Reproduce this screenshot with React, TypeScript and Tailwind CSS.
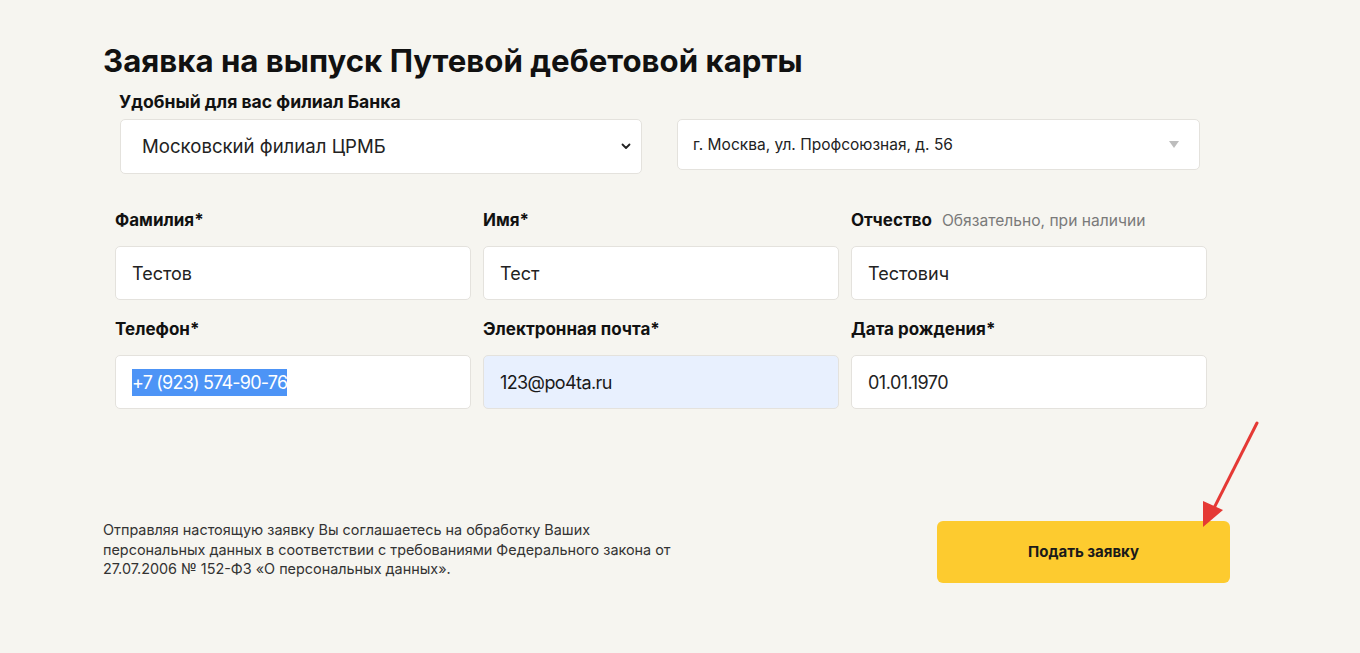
import React from 'react';

const font = { fontFamily: 'Inter, "Noto Sans", sans-serif' };

interface FieldProps {
  label: string;
  required?: boolean;
  hint?: string;
  children: React.ReactNode;
  tone?: 'white' | 'autofill';
}

const Field: React.FC<FieldProps> = ({ label, required, hint, children, tone = 'white' }) => (
  <div className="flex flex-col gap-[15px]">
    <div className="flex items-baseline gap-[10px] h-[21px] leading-[21px]">
      <span className="text-[17px] font-bold text-[#111]">
        {label}
        {required && <span className="font-bold">*</span>}
      </span>
      {hint && <span className="text-[15.6px] text-[#7a7a7a]">{hint}</span>}
    </div>
    <div
      className={
        tone === 'autofill'
          ? 'h-[54px] rounded-[5px] border border-[#e4e2dd] bg-[#e8f0fe] flex items-center px-[16px] text-[18px] text-[#1a1a1a]'
          : 'h-[54px] rounded-[5px] border border-[#e4e2dd] bg-white flex items-center px-[16px] text-[18px] text-[#222]'
      }
    >
      {children}
    </div>
  </div>
);

export default function App() {
  return (
    <div className="relative w-[1360px] h-[653px] bg-[#f6f5f0] overflow-hidden" style={font}>
      <div className="pt-[42px]">
        {/* заголовок */}
        <h1 className="ml-[103px] text-[31.2px] leading-[39px] font-bold text-[#111]">
          Заявка на выпуск Путевой дебетовой карты
        </h1>

        {/* филиал */}
        <div className="ml-[119px] mt-[10px] text-[17.6px] leading-[21px] font-bold text-[#111]">
          Удобный для вас филиал Банка
        </div>
        <div className="mt-[7px] ml-[120px] flex items-start gap-[35px]">
          <div className="w-[522px] h-[55px] rounded-[5px] border border-[#e4e2dd] bg-white flex items-center justify-between pl-[21px] pr-[10px] text-[18.6px] text-[#222]">
            <span>Московский филиал ЦРМБ</span>
            <svg width="10" height="7" viewBox="0 0 10 7" fill="none">
              <path d="M1.5 1.5L5 5L8.5 1.5" stroke="#222" strokeWidth="1.8" strokeLinecap="round" strokeLinejoin="round" />
            </svg>
          </div>
          <div className="w-[523px] h-[51px] rounded-[5px] border border-[#e4e2dd] bg-white flex items-center justify-between pl-[15px] pr-[20px] text-[15.5px] text-[#222]">
            <span>г. Москва, ул. Профсоюзная, д. 56</span>
            <svg width="10" height="7" viewBox="0 0 10 7">
              <path d="M0 0H10L5 7Z" fill="#bdbdbd" />
            </svg>
          </div>
        </div>

        {/* данные */}
        <div className="mt-[36px] ml-[115px] w-[1092px] grid grid-cols-3 gap-x-[12px] gap-y-[19px]">
          <Field label="Фамилия" required>
            Тестов
          </Field>
          <Field label="Имя" required>
            Тест
          </Field>
          <Field label="Отчество" hint="Обязательно, при наличии">
            Тестович
          </Field>
          <Field label="Телефон" required>
            <span className="bg-[#4d94f6] text-white tracking-[-0.8px]">+7 (923) 574-90-76</span>
          </Field>
          <Field label="Электронная почта" required tone="autofill">
            <span className="tracking-[-0.6px]">123@po4ta.ru</span>
          </Field>
          <Field label="Дата рождения" required>
            <span className="tracking-[-0.5px]">01.01.1970</span>
          </Field>
        </div>

        {/* низ */}
        <div className="mt-[111px] ml-[103px] flex items-start">
          <p className="w-[600px] text-[14.4px] leading-[19.5px] text-[#333]">
            Отправляя настоящую заявку Вы соглашаетесь на обработку Ваших
            <br />
            персональных данных в соответствии с требованиями Федерального закона от
            <br />
            27.07.2006 № 152-ФЗ «О персональных данных».
          </p>
          <button className="ml-[234px] mt-[1px] w-[293px] h-[62px] rounded-[6px] bg-[#fdcb2f] text-[15px] font-bold text-[#1a1a1a]">
            Подать заявку
          </button>
        </div>
      </div>

      {/* стрелка */}
      <svg className="absolute left-[1195px] top-[415px]" width="70" height="120" viewBox="0 0 70 120">
        <line x1="62" y1="8" x2="17" y2="97" stroke="#e53935" strokeWidth="3" strokeLinecap="round" />
        <path d="M8 112L8 86L28 95Z" fill="#e53935" />
      </svg>
    </div>
  );
}
